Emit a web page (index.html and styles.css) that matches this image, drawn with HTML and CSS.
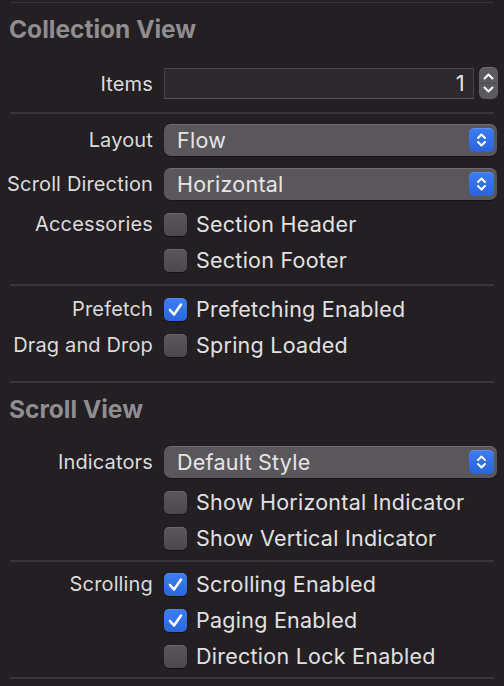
FILE: index.html
```html
<!DOCTYPE html>
<html>
<head>
<meta charset="utf-8">
<link rel="stylesheet" href="styles.css">
</head>
<body>
<div class="panel">
  <div class="line thin first"></div>
  <div class="header h1">Collection View</div>

  <div class="row items-row">
    <div class="label">Items</div>
    <div class="ctrl">
      <div class="field">1</div>
      <div class="stepper">
        <svg width="19" height="32" viewBox="0 0 19 32"><path d="M5.5 11.5 L9.5 7.5 L13.5 11.5" fill="none" stroke="#fff" stroke-width="2" stroke-linecap="round" stroke-linejoin="round"/><line x1="1" y1="16" x2="18" y2="16" stroke="#4a484c" stroke-width="1"/><path d="M5.5 20.5 L9.5 24.5 L13.5 20.5" fill="none" stroke="#fff" stroke-width="2" stroke-linecap="round" stroke-linejoin="round"/></svg>
      </div>
    </div>
  </div>

  <div class="line l2"></div>

  <div class="row popup-row r-layout">
    <div class="label">Layout</div>
    <div class="ctrl"><div class="popup"><span>Flow</span><span class="pbtn"><svg width="25" height="24" viewBox="0 0 25 24"><path d="M9 10 L12.5 6.5 L16 10 M9 14 L12.5 17.5 L16 14" fill="none" stroke="#fff" stroke-width="2" stroke-linecap="round" stroke-linejoin="round"/></svg></span></div></div>
  </div>
  <div class="row popup-row r-dir">
    <div class="label">Scroll Direction</div>
    <div class="ctrl"><div class="popup"><span>Horizontal</span><span class="pbtn"><svg width="25" height="24" viewBox="0 0 25 24"><path d="M9 10 L12.5 6.5 L16 10 M9 14 L12.5 17.5 L16 14" fill="none" stroke="#fff" stroke-width="2" stroke-linecap="round" stroke-linejoin="round"/></svg></span></div></div>
  </div>

  <div class="row cb-row r-acc">
    <div class="label">Accessories</div>
    <div class="ctrl"><span class="cb"></span><span class="cbtext">Section Header</span></div>
  </div>
  <div class="row cb-row">
    <div class="label"></div>
    <div class="ctrl"><span class="cb"></span><span class="cbtext">Section Footer</span></div>
  </div>

  <div class="line l3"></div>

  <div class="row cb-row r-pre">
    <div class="label">Prefetch</div>
    <div class="ctrl"><span class="cb on"><svg width="23" height="23" viewBox="0 0 23 23"><path d="M6 12 L10 16.5 L17 6.5" fill="none" stroke="#fff" stroke-width="2.6" stroke-linecap="round" stroke-linejoin="round"/></svg></span><span class="cbtext">Prefetching Enabled</span></div>
  </div>
  <div class="row cb-row">
    <div class="label">Drag and Drop</div>
    <div class="ctrl"><span class="cb"></span><span class="cbtext">Spring Loaded</span></div>
  </div>

  <div class="line l4"></div>
  <div class="header h2">Scroll View</div>

  <div class="row popup-row r-ind">
    <div class="label">Indicators</div>
    <div class="ctrl"><div class="popup"><span>Default Style</span><span class="pbtn"><svg width="25" height="24" viewBox="0 0 25 24"><path d="M9 10 L12.5 6.5 L16 10 M9 14 L12.5 17.5 L16 14" fill="none" stroke="#fff" stroke-width="2" stroke-linecap="round" stroke-linejoin="round"/></svg></span></div></div>
  </div>
  <div class="row cb-row r-showh">
    <div class="label"></div>
    <div class="ctrl"><span class="cb"></span><span class="cbtext">Show Horizontal Indicator</span></div>
  </div>
  <div class="row cb-row">
    <div class="label"></div>
    <div class="ctrl"><span class="cb"></span><span class="cbtext">Show Vertical Indicator</span></div>
  </div>

  <div class="line l5"></div>

  <div class="row cb-row r-scr">
    <div class="label">Scrolling</div>
    <div class="ctrl"><span class="cb on"><svg width="23" height="23" viewBox="0 0 23 23"><path d="M6 12 L10 16.5 L17 6.5" fill="none" stroke="#fff" stroke-width="2.6" stroke-linecap="round" stroke-linejoin="round"/></svg></span><span class="cbtext">Scrolling Enabled</span></div>
  </div>
  <div class="row cb-row">
    <div class="label"></div>
    <div class="ctrl"><span class="cb on"><svg width="23" height="23" viewBox="0 0 23 23"><path d="M6 12 L10 16.5 L17 6.5" fill="none" stroke="#fff" stroke-width="2.6" stroke-linecap="round" stroke-linejoin="round"/></svg></span><span class="cbtext">Paging Enabled</span></div>
  </div>
  <div class="row cb-row">
    <div class="label"></div>
    <div class="ctrl"><span class="cb"></span><span class="cbtext">Direction Lock Enabled</span></div>
  </div>

  <div class="line l6"></div>
</div>
</body>
</html>
```

FILE: styles.css
```css
html, body {
  margin: 0;
  padding: 0;
  background: #231f23;
}
body {
  width: 504px;
  height: 686px;
  overflow: hidden;
  font-family: Inter, "Liberation Sans", sans-serif;
  color: #e2e1e2;
}
.panel {
  display: flex;
  flex-direction: column;
  padding-top: 2px;
}
.line {
  height: 2px;
  margin-left: 10px;
  margin-right: 10px;
  background: #3a373b;
  flex: none;
}
.line.thin { height: 1px; }
.header {
  font-size: 24.5px;
  font-weight: 700;
  line-height: 30px;
  height: 30px;
  color: #8f8d90;
  padding-left: 9px;
}
.h1 { margin-top: 11px; }
.h2 { margin-top: 11px; }
.row {
  display: flex;
  align-items: center;
  flex: none;
}
.label {
  width: 153px;
  flex: none;
  text-align: right;
  font-size: 20px;
  letter-spacing: 0.15px;
  color: #dcdbdc;
  white-space: nowrap;
}
.ctrl {
  margin-left: 11px;
  display: flex;
  align-items: center;
  flex: 1;
  font-size: 21.5px;
  letter-spacing: 0.25px;
  white-space: nowrap;
}
.items-row { height: 31px; margin-top: 24px; }
.l2 { margin-top: 13px; }
.popup-row { height: 32px; }
.r-layout { margin-top: 10px; }
.r-dir { margin-top: 12px; }
.cb-row { height: 36px; }
.r-acc { margin-top: 6px; }
.l3 { margin-top: 6px; }
.r-pre { margin-top: 5px; }
.l4 { margin-top: 18px; }
.r-ind { margin-top: 22px; }
.r-showh { margin-top: 6px; }
.l5 { margin-top: 4px; }
.r-scr { margin-top: 4px; }
.l6 { margin-top: 3px; }

.field {
  width: 310px;
  height: 31px;
  box-sizing: border-box;
  background: #2c292d;
  border: 1px solid #464448;
  border-bottom-color: #5a585c;
  text-align: right;
  padding-right: 8px;
  line-height: 29px;
  font-size: 22px;
  color: #e4e3e4;
}
.stepper {
  width: 19px;
  height: 32px;
  margin-left: 5px;
  border-radius: 6px;
  background: #5c5a5e;
  box-shadow: inset 0 1px 0 rgba(255,255,255,0.12);
  position: relative;
  top: -1px;
}
.stepper svg { display: block; }
.popup {
  width: 333px;
  height: 32px;
  box-sizing: border-box;
  border-radius: 7px;
  background: #59575b;
  box-shadow: inset 0 1px 0 rgba(255,255,255,0.13), 0 1px 1px rgba(0,0,0,0.35);
  display: flex;
  align-items: center;
  justify-content: space-between;
  padding-left: 13px;
  padding-right: 3px;
  color: #e6e5e6;
}
.pbtn {
  width: 25px;
  height: 24px;
  border-radius: 5px;
  background: linear-gradient(#3c7ef2, #2a63d9);
  box-shadow: inset 0 1px 0 rgba(255,255,255,0.15);
  display: block;
}
.pbtn svg { display: block; }
.cb {
  width: 23px;
  height: 23px;
  border-radius: 5px;
  background: linear-gradient(#59575b, #4b494d);
  box-shadow: inset 0 1px 0 rgba(255,255,255,0.1), 0 0.5px 1px rgba(0,0,0,0.4);
  flex: none;
  display: block;
}
.cb.on {
  background: linear-gradient(#3c7ef2, #2b66dc);
}
.cb svg { display: block; }
.cbtext {
  margin-left: 9px;
  color: #e2e1e2;
}
```
